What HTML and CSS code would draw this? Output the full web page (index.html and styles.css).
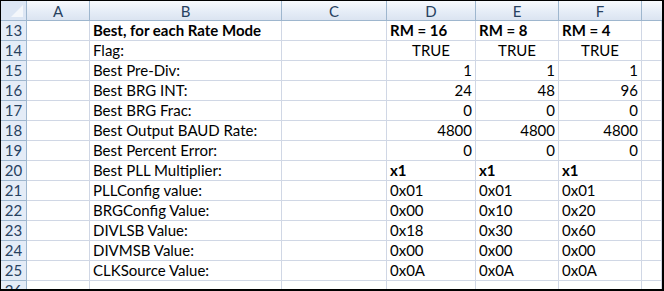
FILE: index.html
```html
<!DOCTYPE html>
<html>
<head>
<meta charset="utf-8">
<link rel="stylesheet" href="styles.css">
</head>
<body>
<div class="frame">
  <div class="sheet">
    <div class="corner"><span class="tri"></span></div>
    <div class="ch">A</div><div class="ch">B</div><div class="ch">C</div><div class="ch">D</div><div class="ch">E</div><div class="ch">F</div><div class="ch last"></div>

    <div class="rh">13</div><div class="c"></div><div class="c b">Best, for each Rate Mode</div><div class="c"></div><div class="c b">RM = 16</div><div class="c b">RM = 8</div><div class="c b">RM = 4</div><div class="c"></div>
    <div class="rh">14</div><div class="c"></div><div class="c">Flag:</div><div class="c"></div><div class="c ctr">TRUE</div><div class="c ctr">TRUE</div><div class="c ctr">TRUE</div><div class="c"></div>
    <div class="rh">15</div><div class="c"></div><div class="c">Best Pre-Div:</div><div class="c"></div><div class="c r">1</div><div class="c r">1</div><div class="c r">1</div><div class="c"></div>
    <div class="rh">16</div><div class="c"></div><div class="c">Best BRG INT:</div><div class="c"></div><div class="c r">24</div><div class="c r">48</div><div class="c r">96</div><div class="c"></div>
    <div class="rh">17</div><div class="c"></div><div class="c">Best BRG Frac:</div><div class="c"></div><div class="c r">0</div><div class="c r">0</div><div class="c r">0</div><div class="c"></div>
    <div class="rh">18</div><div class="c"></div><div class="c">Best Output BAUD Rate:</div><div class="c"></div><div class="c r">4800</div><div class="c r">4800</div><div class="c r">4800</div><div class="c"></div>
    <div class="rh">19</div><div class="c"></div><div class="c">Best Percent Error:</div><div class="c"></div><div class="c r">0</div><div class="c r">0</div><div class="c r">0</div><div class="c"></div>
    <div class="rh">20</div><div class="c"></div><div class="c">Best PLL Multiplier:</div><div class="c"></div><div class="c b">x1</div><div class="c b">x1</div><div class="c b">x1</div><div class="c"></div>
    <div class="rh">21</div><div class="c"></div><div class="c">PLLConfig value:</div><div class="c"></div><div class="c">0x01</div><div class="c">0x01</div><div class="c">0x01</div><div class="c"></div>
    <div class="rh">22</div><div class="c"></div><div class="c">BRGConfig Value:</div><div class="c"></div><div class="c">0x00</div><div class="c">0x10</div><div class="c">0x20</div><div class="c"></div>
    <div class="rh">23</div><div class="c"></div><div class="c">DIVLSB Value:</div><div class="c"></div><div class="c">0x18</div><div class="c">0x30</div><div class="c">0x60</div><div class="c"></div>
    <div class="rh">24</div><div class="c"></div><div class="c">DIVMSB Value:</div><div class="c"></div><div class="c">0x00</div><div class="c">0x00</div><div class="c">0x00</div><div class="c"></div>
    <div class="rh">25</div><div class="c"></div><div class="c">CLKSource Value:</div><div class="c"></div><div class="c">0x0A</div><div class="c">0x0A</div><div class="c">0x0A</div><div class="c"></div>
    <div class="rh">26</div><div class="c"></div><div class="c"></div><div class="c"></div><div class="c"></div><div class="c"></div><div class="c"></div><div class="c"></div>
  </div>
</div>
</body>
</html>
```
FILE: styles.css
```css
html, body {
  margin: 0;
  padding: 0;
  background: #ffffff;
}
.frame {
  width: 664px;
  height: 291px;
  box-sizing: border-box;
  border-top: 1px solid #000;
  border-left: 1px solid #000;
  border-right: 2px solid #000;
  border-bottom: 2px solid #000;
  overflow: hidden;
  background: #fff;
}
.sheet {
  display: grid;
  grid-template-columns: 26px 63px 192px 105px 89px 83px 83px 20px;
  grid-auto-rows: 20px;
  font-family: Lato, "Open Sans", sans-serif;
  font-size: 15px;
  color: #000;
}
.corner {
  background: #dce6f4;
  border-right: 1px solid #9eb6ce;
  border-bottom: 1px solid #9eb6ce;
  box-sizing: border-box;
  position: relative;
}
.tri {
  position: absolute;
  right: 3px;
  bottom: 3px;
  width: 0;
  height: 0;
  border-left: 12px solid transparent;
  border-bottom: 12px solid #f4f7fb;
}
.ch {
  background: linear-gradient(#f8fafd, #e6edf7 55%, #dbe4f1);
  border-right: 1px solid #9eb6ce;
  border-bottom: 1px solid #9eb6ce;
  box-sizing: border-box;
  display: flex;
  align-items: center;
  justify-content: center;
  color: #27415f;
  font-family: Lato, "Open Sans", sans-serif;
  font-size: 15px;
  padding-top: 1px;
}
.ch.last {
  border-right: none;
}
.rh {
  background: #e4ecf7;
  border-right: 1px solid #9eb6ce;
  border-bottom: 1px solid #9eb6ce;
  box-sizing: border-box;
  display: flex;
  align-items: flex-end;
  justify-content: center;
  color: #27415f;
  padding-bottom: 1px;
}
.c {
  border-right: 1px solid #d0d7e5;
  border-bottom: 1px solid #d0d7e5;
  box-sizing: border-box;
  display: flex;
  align-items: flex-end;
  padding: 0 3px 1px 3px;
  white-space: nowrap;
  line-height: 18px;
}
.b { font-weight: bold; }
.r { justify-content: flex-end; }
.ctr { justify-content: center; }
```
